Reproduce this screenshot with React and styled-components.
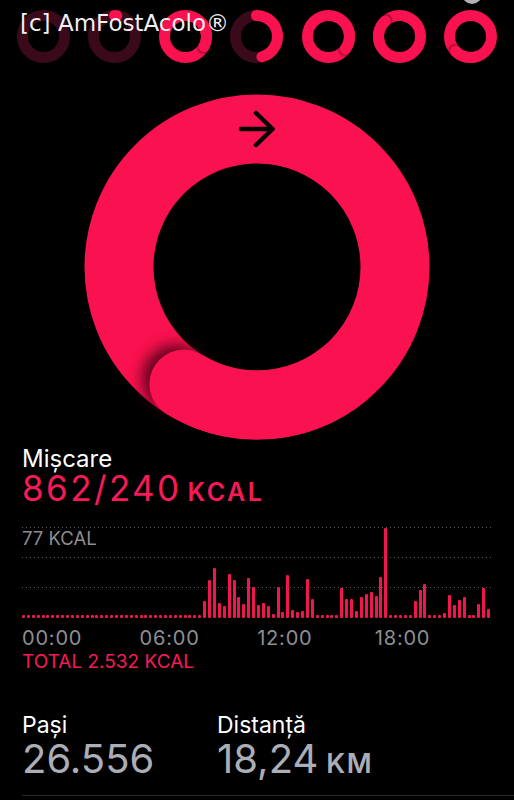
import React from "react";
import styled, { createGlobalStyle } from "styled-components";

const RED = "#fa114f";
const TEXT_RED = "#f71a57";
const TRACK = "#3a0a1a";

const GlobalStyle = createGlobalStyle`
  html, body {
    margin: 0;
    padding: 0;
    background: #000;
  }
  body {
    font-family: Inter, "Liberation Sans", sans-serif;
    color: #fff;
  }
`;

const Page = styled.div`
  width: 514px;
  min-height: 800px;
  background: #000;
  overflow: hidden;
`;

const TopStrip = styled.div`
  position: relative;
  display: flex;
  gap: 18.3px;
  padding: 10px 0 0 16.5px;
`;

const Watermark = styled.div`
  position: absolute;
  left: 20px;
  top: 11.5px;
  font-family: "DejaVu Sans", sans-serif;
  font-size: 23px;
  line-height: 23px;
  color: rgba(255, 255, 255, 0.95);
  white-space: nowrap;
`;

const DayDot = styled.div`
  position: absolute;
  left: 462px;
  top: -16px;
  width: 20px;
  height: 20px;
  border-radius: 50%;
  background: #b3b3b3;
`;

const BigRingWrap = styled.div`
  display: flex;
  justify-content: center;
  margin-top: 31px;
`;

const Section = styled.div`
  padding: 0 22px;
`;

const Title = styled.div`
  font-size: 24px;
  line-height: 27px;
  margin-top: ${(p) => p.mt || 0}px;
  color: #fff;
`;

const BigValue = styled.div`
  font-size: 35px;
  line-height: 32px;
  color: ${TEXT_RED};
  letter-spacing: 2.4px;
`;

const Unit = styled.span`
  font-size: ${(p) => p.size || 24}px;
  font-weight: 600;
  letter-spacing: ${(p) => p.ls || 1.5}px;
  margin-left: ${(p) => p.ml || 8}px;
`;

const ChartArea = styled.div`
  display: grid;
  width: 470px;
  height: 91px;
  margin-top: 19px;
`;

const GridLayer = styled.div`
  grid-area: 1 / 1;
  display: flex;
  flex-direction: column;
`;

const DotLine = styled.div`
  height: 1px;
  background-image: linear-gradient(to right, #5a5a5a 0 1px, transparent 1px 4px);
  background-size: 4px 1px;
`;

const GridGap = styled.div`
  height: 29px;
  display: flex;
  align-items: center;
  font-size: 18.5px;
  color: #8e8e93;
  padding-bottom: 9px;
  box-sizing: border-box;
`;

const Bars = styled.div`
  grid-area: 1 / 1;
  display: grid;
  grid-template-columns: repeat(96, 1fr);
  align-items: end;
`;

const Bar = styled.div`
  width: 3px;
  height: ${(p) => p.h}px;
  background: #f0164f;
  border-radius: 1px;
`;

const Axis = styled.div`
  display: grid;
  grid-template-columns: repeat(4, 117.6px);
  margin-top: 8px;
  font-size: 20px;
  line-height: 24px;
  color: #8e8e93;
  letter-spacing: 0.8px;
`;

const Total = styled.div`
  margin-top: -0.5px;
  font-size: 19px;
  line-height: 24px;
  color: ${TEXT_RED};
`;

const Stats = styled.div`
  display: grid;
  grid-template-columns: 195px 1fr;
  margin-top: 39px;
`;

const StatLabel = styled.div`
  font-size: 23px;
  line-height: 24px;
  color: #fff;
`;

const StatValue = styled.div`
  font-size: 40px;
  line-height: 36px;
  margin-top: 4px;
  color: #abadb7;
`;

const Divider = styled.div`
  margin: 13px 0 0 22px;
  height: 1px;
  background: #2c2c2e;
`;

const polar = (cx, cy, r, a) => {
  const rad = (a * Math.PI) / 180;
  return [cx + r * Math.sin(rad), cy - r * Math.cos(rad)];
};

const arcPath = (cx, cy, r, a0, a1) => {
  const [x0, y0] = polar(cx, cy, r, a0);
  const [x1, y1] = polar(cx, cy, r, a1);
  const large = a1 - a0 > 180 ? 1 : 0;
  return `M ${x0} ${y0} A ${r} ${r} 0 ${large} 1 ${x1} ${y1}`;
};

// ring: full = closed ring, with the tip of the overlap drawn on top
function Ring({ size, stroke, end, full, start = 0, id, shadow = 4 }) {
  const c = size / 2;
  const r = (size - stroke) / 2;
  const tip = polar(c, c, r, end + (shadow * 40) / r);
  const cap = polar(c, c, r, end);
  return (
    <svg width={size} height={size} viewBox={`0 0 ${size} ${size}`}>
      <defs>
        <filter id={id} x="-50%" y="-50%" width="200%" height="200%">
          <feGaussianBlur stdDeviation={stroke / 9} />
        </filter>
      </defs>
      <circle cx={c} cy={c} r={r} fill="none" stroke={full ? RED : TRACK} strokeWidth={stroke} />
      {full ? (
        <>
          <circle cx={tip[0]} cy={tip[1]} r={stroke / 2} fill="#5a0018" opacity="0.8" filter={`url(#${id})`} />
          <path d={arcPath(c, c, r, end - 70, end)} fill="none" stroke={RED} strokeWidth={stroke} />
          <circle cx={cap[0]} cy={cap[1]} r={stroke / 2} fill={RED} />
        </>
      ) : end > start ? (
        <path d={arcPath(c, c, r, start, end)} fill="none" stroke={RED} strokeWidth={stroke} strokeLinecap="round" />
      ) : null}
    </svg>
  );
}

const days = [
  { end: 0 },
  { end: 6 },
  { end: 119, full: true },
  { end: 165 },
  { end: 127, full: true },
  { end: 318, full: true },
  { end: 226, full: true },
];

const peaks = {
  37: 17, 38: 38, 39: 50, 40: 15, 41: 12, 42: 44, 43: 38, 44: 21, 45: 14, 46: 40,
  47: 31, 48: 13, 49: 15, 50: 12, 51: 4, 52: 31, 53: 6, 54: 43, 55: 8, 56: 6,
  57: 7, 58: 39, 59: 19, 65: 30, 66: 19, 67: 19, 68: 7, 69: 21, 70: 24, 71: 26,
  72: 22, 73: 41, 74: 90, 80: 17, 81: 28, 82: 34, 86: 5, 87: 23, 88: 13, 89: 18,
  90: 21, 93: 14, 94: 30, 95: 9,
};
const bars = Array.from({ length: 96 }, (_, i) => peaks[i] || 3);

export default function App() {
  const tip = polar(173, 173, 138, 212);
  const shade = polar(173, 173, 138, 216);
  return (
    <Page>
      <GlobalStyle />
      <TopStrip>
        {days.map((d, i) => (
          <Ring key={i} id={`s${i}`} size={53} stroke={11} end={d.end} full={d.full} shadow={1.5} />
        ))}
        <Watermark>[c] AmFostAcolo®</Watermark>
        <DayDot />
      </TopStrip>

      <BigRingWrap>
        <svg width="346" height="346" viewBox="0 0 346 346">
          <defs>
            <filter id="big" x="-50%" y="-50%" width="200%" height="200%">
              <feGaussianBlur stdDeviation="7" />
            </filter>
          </defs>
          <circle cx="173" cy="173" r="138" fill="none" stroke={RED} strokeWidth="69" />
          <circle cx={shade[0]} cy={shade[1]} r="34" fill="#4a0014" opacity="0.85" filter="url(#big)" />
          <path d={arcPath(173, 173, 138, 140, 212)} fill="none" stroke={RED} strokeWidth="69" />
          <circle cx={tip[0]} cy={tip[1]} r="34.5" fill={RED} />
          <g fill="none" stroke="#000" strokeWidth="4.5" strokeLinecap="round" strokeLinejoin="round">
            <path d="M157 35 H188" />
            <path d="M172 19 L188.5 35 L172 51" />
          </g>
        </svg>
      </BigRingWrap>

      <Section>
        <Title mt={5}>Mișcare</Title>
        <BigValue>
          862/240<Unit size={25} ls={2.5} ml={6}>KCAL</Unit>
        </BigValue>

        <ChartArea>
          <GridLayer>
            <DotLine />
            <GridGap>77 KCAL</GridGap>
            <DotLine />
            <GridGap />
            <DotLine />
          </GridLayer>
          <Bars>
            {bars.map((h, i) => (
              <Bar key={i} h={h} />
            ))}
          </Bars>
        </ChartArea>

        <Axis>
          <span>00:00</span>
          <span>06:00</span>
          <span>12:00</span>
          <span>18:00</span>
        </Axis>
        <Total>TOTAL 2.532 KCAL</Total>

        <Stats>
          <div>
            <StatLabel>Pași</StatLabel>
            <StatValue>26.556</StatValue>
          </div>
          <div>
            <StatLabel>Distanță</StatLabel>
            <StatValue>
              18,24<Unit size={27}>KM</Unit>
            </StatValue>
          </div>
        </Stats>
      </Section>
      <Divider />
    </Page>
  );
}
